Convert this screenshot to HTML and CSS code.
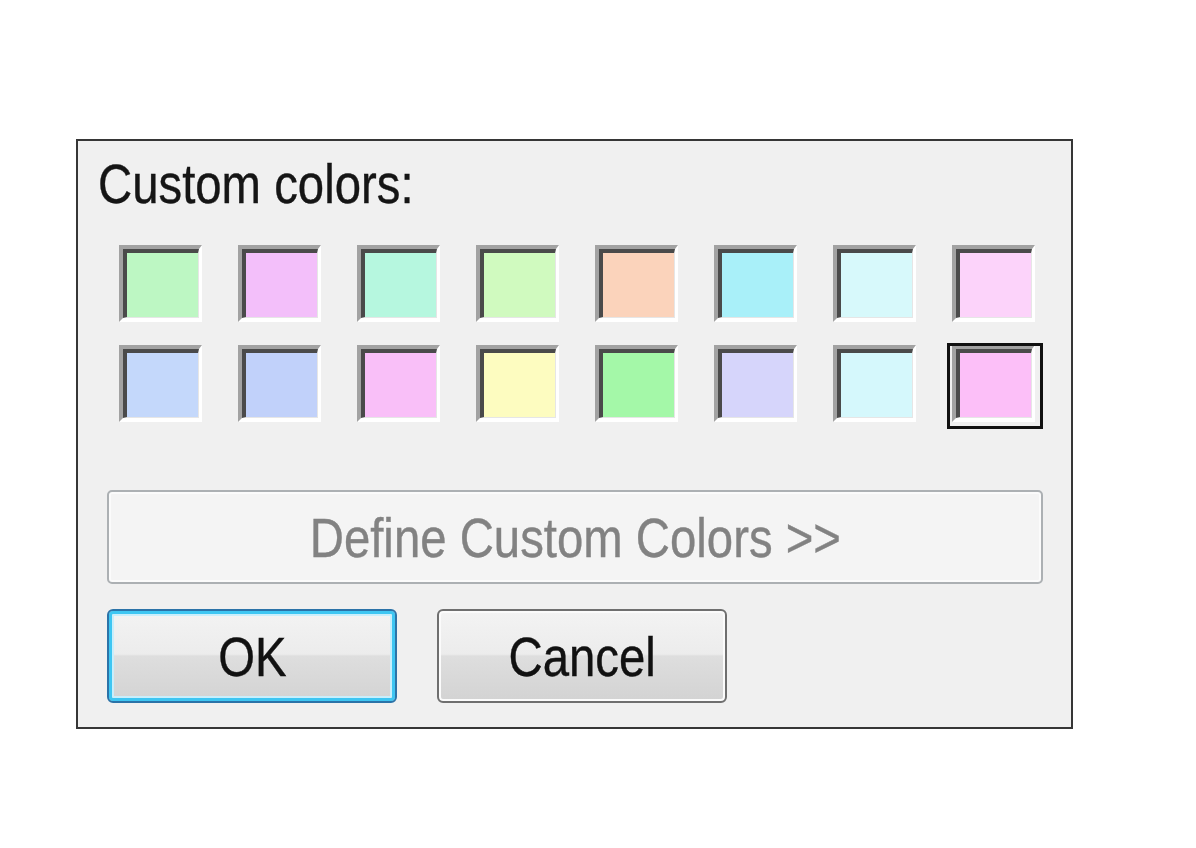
FILE: index.html
```html
<!DOCTYPE html>
<html>
<head>
<meta charset="utf-8">
<link rel="stylesheet" href="styles.css">
</head>
<body>
<div class="dialog">
  <div class="label"><span class="txt">Custom colors:</span></div>
  <div class="grid">
    <div class="swatch"><div class="fill" style="background:#bdf7c3"></div></div>
    <div class="swatch"><div class="fill" style="background:#f3bffa"></div></div>
    <div class="swatch"><div class="fill" style="background:#b6f7df"></div></div>
    <div class="swatch"><div class="fill" style="background:#d0fabf"></div></div>
    <div class="swatch"><div class="fill" style="background:#fbd3bb"></div></div>
    <div class="swatch"><div class="fill" style="background:#a9f0f9"></div></div>
    <div class="swatch"><div class="fill" style="background:#d7f9fb"></div></div>
    <div class="swatch"><div class="fill" style="background:#fcd3fa"></div></div>
    <div class="swatch"><div class="fill" style="background:#c4d8fb"></div></div>
    <div class="swatch"><div class="fill" style="background:#c1d1fa"></div></div>
    <div class="swatch"><div class="fill" style="background:#f9bff8"></div></div>
    <div class="swatch"><div class="fill" style="background:#fdfcc0"></div></div>
    <div class="swatch"><div class="fill" style="background:#a4f8a8"></div></div>
    <div class="swatch"><div class="fill" style="background:#d6d5fb"></div></div>
    <div class="swatch"><div class="fill" style="background:#d5f8fc"></div></div>
    <div class="swatch selected"><div class="fill" style="background:#fcbff8"></div></div>
  </div>
  <div class="define"><span class="txt">Define Custom Colors &gt;&gt;</span></div>
  <div class="buttons">
    <div class="btn ok"><span class="txt">OK</span></div>
    <div class="btn cancel"><span class="txt">Cancel</span></div>
  </div>
</div>
</body>
</html>
```

FILE: styles.css
```css
html, body {
  margin: 0;
  padding: 0;
  background: #ffffff;
}

body {
  font-family: "Liberation Sans", Arial, sans-serif;
}

.txt {
  display: inline-block;
  transform: scaleX(0.845);
  -webkit-text-stroke: 0.4px currentColor;
}

.dialog {
  box-sizing: border-box;
  width: 997px;
  height: 590px;
  margin: 139px 0 0 76px;
  border: 2px solid #363636;
  background: #f0f0f0;
  display: flex;
  flex-direction: column;
}

.label {
  margin: 13px 0 0 20px;
  height: 60px;
  line-height: 60px;
  font-size: 56px;
  color: #151515;
}

.label .txt {
  transform-origin: left center;
}

.grid {
  margin: 31px 0 0 41px;
  display: grid;
  grid-template-columns: repeat(8, 83px);
  grid-auto-rows: 77px;
  column-gap: 36px;
  row-gap: 23px;
}

.swatch {
  box-sizing: border-box;
  width: 83px;
  height: 77px;
  border-style: solid;
  border-width: 4px 3px 4px 4px;
  border-color: #a2a2a2 #ffffff #ffffff #a2a2a2;
}

.fill {
  box-sizing: border-box;
  width: 100%;
  height: 100%;
  border-top: 4px solid #4a4a4a;
  border-left: 4px solid #4a4a4a;
  border-right: 1px solid #e6e6e6;
  border-bottom: 1px solid #e6e6e6;
}

.swatch.selected {
  position: relative;
}

.swatch.selected::after {
  content: "";
  position: absolute;
  left: -9px;
  top: -6px;
  right: -11px;
  bottom: -11px;
  border: 3px solid #111111;
}

.define {
  box-sizing: border-box;
  margin: 68px 0 0 29px;
  width: 936px;
  height: 94px;
  border: 2px solid #acb0b3;
  border-radius: 5px;
  background: #f4f4f4;
  box-shadow: inset 0 0 0 2px #fbfbfb;
  display: flex;
  align-items: center;
  justify-content: center;
  font-size: 56px;
  color: #828282;
}

.buttons {
  margin: 25px 0 0 29px;
  display: flex;
  gap: 40px;
}

.btn {
  box-sizing: border-box;
  width: 290px;
  height: 94px;
  border-radius: 6px;
  display: flex;
  align-items: center;
  justify-content: center;
  font-size: 56px;
  color: #111111;
  background: linear-gradient(to bottom, #f3f3f3 0%, #ececec 48%, #dedede 50%, #d3d3d3 100%);
}

.ok {
  border: 2px solid #2b73a8;
  box-shadow: inset 0 0 0 3px #3ec6f2, inset 0 0 0 5px #c9eefb;
}

.cancel {
  border: 2px solid #6f6f6f;
  box-shadow: inset 0 0 0 2px #fbfbfb;
}
```
